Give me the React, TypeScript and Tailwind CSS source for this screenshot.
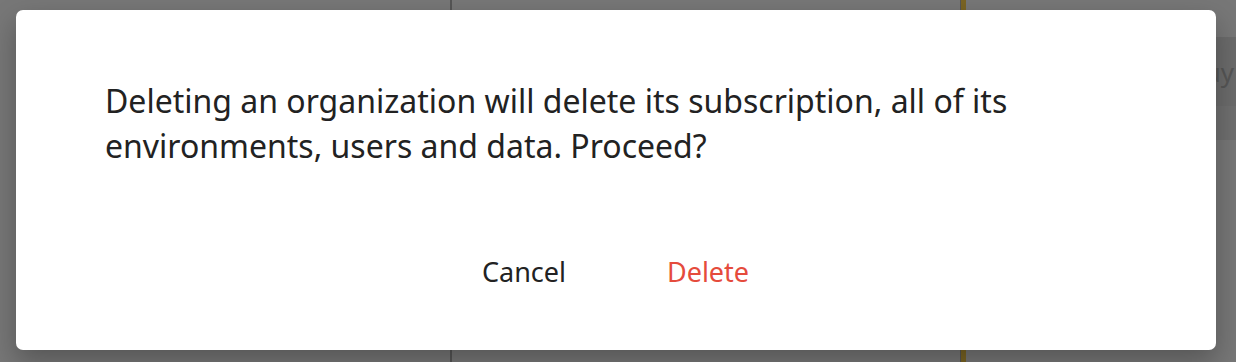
import React from 'react';

const font = { fontFamily: '"Noto Sans", "Open Sans", sans-serif' };

export default function App() {
  return (
    <div className="relative h-[362px] w-full overflow-hidden bg-[#777777]" style={font}>
      {/* page behind the overlay */}
      <div className="flex h-full">
        <div className="w-[452px] shrink-0 border-r-2 border-[#555555]" />
        <div className="w-[509px] shrink-0 border-r border-[#555555]" />
        <div className="w-[5px] shrink-0 bg-[#7a6423]" />
        <div className="flex-1">
          <div className="mt-[37px] flex h-[69px] justify-end bg-[#6b6b6b]">
            <span className="mt-[16px] pr-[2px] text-[26px] text-[#565656]">Buy</span>
          </div>
          <div className="h-[34px] bg-[#6f6f6f]" />
        </div>
      </div>

      {/* dialog */}
      <div className="absolute left-[16px] top-[10px] flex h-[340px] w-[1200px] flex-col rounded-[7px] bg-white shadow-[0_12px_28px_rgba(0,0,0,0.28)]">
        <p className="px-[89px] pt-[68px] text-[32px] leading-[45px] text-[#222222]">
          Deleting an organization will delete its subscription, all of its environments, users and data. Proceed?
        </p>
        <div className="mt-[80px] flex justify-center gap-[24px]">
          <button className="h-[48px] w-[160px] text-[27px] text-[#222222]">Cancel</button>
          <button className="h-[48px] w-[160px] text-[27px] text-[#e54b3c]">Delete</button>
        </div>
      </div>
    </div>
  );
}
